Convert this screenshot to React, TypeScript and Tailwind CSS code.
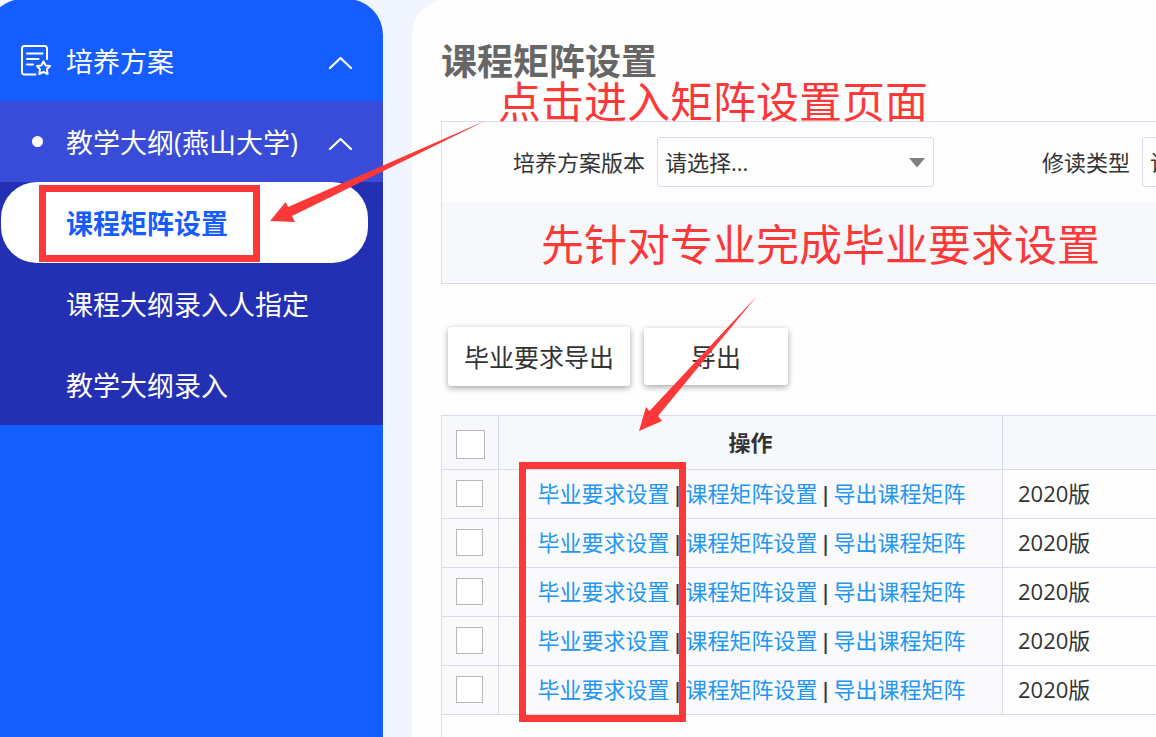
import type { ReactNode } from "react";

const rows = [1, 2, 3, 4, 5];

function Chevron() {
  return (
    <svg className="ml-auto h-4 w-6" viewBox="0 0 24 16" fill="none" stroke="#fff" strokeWidth="2.2" strokeLinecap="round" strokeLinejoin="round">
      <path d="M2 13 L12.500 3 L23 13" />
    </svg>
  );
}

function PlanIcon() {
  return (
    <svg className="mb-1.5 h-8 w-8 shrink-0" viewBox="0 0 32 32" fill="none" stroke="#fff" strokeWidth="2" strokeLinecap="round" strokeLinejoin="round">
      <path d="M15.500 30.500 H4.500 Q2 30.500 2 28 V4.500 Q2 2 4.500 2 H24.500 Q27 2 27 4.500 V15" />
      <path d="M7 9.500 H22.500 M7 15 H18.500 M7 20.500 H13" />
      <path d="M23.500 17.300 L25.500 21.400 L30 22 L26.800 25.300 L27.600 30 L23.500 27.800 L19.300 30 L20 25.300 L17 22 L21.400 21.400 Z" />
    </svg>
  );
}

function Field({ id, label }: { id: string; label: string }) {
  return (
    <div className="flex items-center gap-3">
      <label htmlFor={id}>{label}</label>
      <div className="relative">
        <select id={id} className="block h-[50px] w-[277px] appearance-none rounded-[3px] border border-[#d9daee] bg-[#fefeff] px-[7px] text-[22px] text-[#333]">
          <option>请选择...</option>
        </select>
        <svg className="pointer-events-none absolute top-[21px] right-[9px] h-2.5 w-4" viewBox="0 0 16 10">
          <path d="M0 0 H16 L8 9.500 Z" fill="#808080" />
        </svg>
      </div>
    </div>
  );
}

function Action({ children }: { children: ReactNode }) {
  return (
    <a href="#" className="text-[#2196f3]">
      {children}
    </a>
  );
}

function Divider() {
  return <span className="w-4 text-center font-semibold">|</span>;
}

export default function App() {
  return (
    <div className="relative flex h-screen gap-[29px] overflow-hidden bg-[#f0f5ff] font-['Open_Sans','Noto_Sans_CJK_SC',sans-serif] text-[22px] text-[#333]">
      <nav className="-mt-px -ml-[13px] w-[396px] shrink-0 rounded-t-[36px] bg-[#165dff] pt-[21px] text-[27px] text-white">
        <button className="flex h-[81px] w-full items-center pt-1 pr-[31px] pl-[33px] text-left">
          <PlanIcon />
          <span className="ml-3.5">培养方案</span>
          <Chevron />
        </button>
        <button className="flex h-[81px] w-full items-center bg-[#384cd8] pt-1 pr-[31px] pl-[45px] text-left">
          <span className="mr-[23px] mb-1 size-[11px] rounded-full bg-white" />
          <span>教学大纲(燕山大学)</span>
          <Chevron />
        </button>
        <ul className="bg-[#2430b3]">
          <li>
            <a href="#" className="mr-[15px] ml-3.5 flex h-[81px] items-center rounded-[36px] bg-white pt-1 pl-[65px] font-bold text-[#165dff]">
              课程矩阵设置
            </a>
          </li>
          <li>
            <a href="#" className="flex h-[81px] items-center pt-1 pl-[79px]">课程大纲录入人指定</a>
          </li>
          <li>
            <a href="#" className="flex h-[81px] items-center pt-1 pl-[79px]">教学大纲录入</a>
          </li>
        </ul>
      </nav>

      <main className="-mt-px min-w-0 flex-1 overflow-hidden rounded-tl-[36px] bg-[#fefefe] pl-[29px]">
        <h1 className="mt-9 h-[86px] text-[36px] leading-[54px] font-bold text-[#666]">课程矩阵设置</h1>

        <form className="w-[1400px] border border-[#d9daee]">
          <div className="flex h-20 items-center gap-[108px] pl-[71px]">
            <Field id="version" label="培养方案版本" />
            <Field id="type" label="修读类型" />
          </div>
          <div className="h-[81px] bg-[#f7f8fc]" />
        </form>

        <div className="mt-[43px] flex items-center gap-3.5 pl-[7px] text-[25px]">
          <button className="h-[59px] w-[182px] rounded-[3px] bg-white pt-0.5 shadow-[0_2px_6px_rgba(0,0,0,0.35)]">毕业要求导出</button>
          <button className="h-[57px] w-36 rounded-[3px] bg-white pt-0.5 shadow-[0_2px_6px_rgba(0,0,0,0.35)]">导出</button>
        </div>

        <div className="mt-[29px] h-[600px] w-[1400px] border border-[#d9daee]">
          <table className="w-full table-fixed border-separate border-spacing-0">
            <colgroup>
              <col className="w-[57px]" />
              <col className="w-[504px]" />
              <col />
            </colgroup>
            <thead>
              <tr className="h-[54px] bg-[#f7f8fc]">
                <th className="border-r border-b border-[#d9daee] pt-1 pl-3.5">
                  <input type="checkbox" aria-label="全选" className="block size-[29px] appearance-none border border-[#b8b8b8] bg-white" />
                </th>
                <th className="border-r border-b border-[#d9daee] font-bold">操作</th>
                <th className="border-b border-[#d9daee]" />
              </tr>
            </thead>
            <tbody>
              {rows.map((n) => (
                <tr key={n} className="h-[49px]">
                  <td className="border-r border-b border-[#d9daee] bg-[#fafafd] pb-0.5 pl-3.5">
                    <input type="checkbox" aria-label={`选择第${n}行`} className="block size-[27px] appearance-none border border-[#b8b8b8] bg-white" />
                  </td>
                  <td className="border-r border-b border-[#d9daee] bg-[#fafafd] pb-0.5 pl-0.5">
                    <div className="flex justify-center leading-[32px]">
                      <Action>毕业要求设置</Action>
                      <Divider />
                      <Action>课程矩阵设置</Action>
                      <Divider />
                      <Action>导出课程矩阵</Action>
                    </div>
                  </td>
                  <td className="border-b border-[#d9daee] pb-0.5 pl-[15px] leading-[32px]">2020版</td>
                </tr>
              ))}
            </tbody>
          </table>
        </div>
      </main>

      <div className="pointer-events-none absolute inset-0 text-[43px] leading-[60px] whitespace-nowrap text-[#fc3838]">
        <div className="absolute top-[185px] left-[39px] h-[77px] w-[221px] border-7 border-[#fc3838]" />
        <div className="absolute top-[462px] left-[519px] h-[260px] w-[167px] border-7 border-[#fc3838]" />
        <p className="absolute top-[72px] left-[498px]">点击进入矩阵设置页面</p>
        <p className="absolute top-[215px] left-[541px]">先针对专业完成毕业要求设置</p>
        <svg className="absolute top-[120px] left-[270px] h-[103px] w-[218px]" viewBox="0 0 218 103" fill="#fc3838">
          <path d="M0 101 L15.700 82 L18 87 L217 0 L22 96 L25 102 Z" />
        </svg>
        <svg className="absolute top-[296px] left-[639px] h-[136px] w-[119px]" viewBox="0 0 119 136" fill="#fc3838">
          <path d="M0 135 L7 111 L10.500 115 L118 0 L19 120 L23 125 Z" />
        </svg>
      </div>
    </div>
  );
}
